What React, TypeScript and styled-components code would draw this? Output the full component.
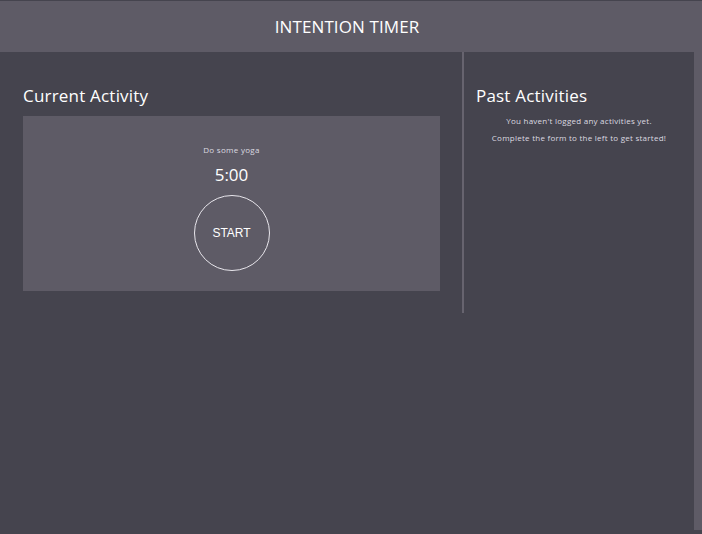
import React from "react";
import styled, { createGlobalStyle } from "styled-components";

const Global = createGlobalStyle`
  html, body { margin: 0; padding: 0; background: #45444e; }
  body { font-family: "Open Sans", "Noto Sans", sans-serif; color: #ffffff; }
  * { box-sizing: border-box; }
`;

const Page = styled.div`
  padding-top: 1px;
  width: 702px;
  display: flex;
  align-items: flex-start;
`;

const Content = styled.div`
  width: 694px;
`;

const Header = styled.header`
  height: 51px;
  background: #5e5b66;
  display: flex;
  align-items: center;
  justify-content: center;
`;

const Title = styled.h1`
  margin: 0;
  font-size: 17px;
  font-weight: 500;
  letter-spacing: 0.1px;
  color: #ffffff;
`;

const Main = styled.main`
  display: flex;
  align-items: flex-start;
  height: 478px;
`;

const LeftSection = styled.section`
  width: 462px;
  padding: 34px 22px 0 23px;
`;

const Divider = styled.div`
  width: 2px;
  height: 261px;
  background: #67646f;
`;

const RightSection = styled.section`
  width: 230px;
  padding: 34px 0 0 12px;
`;

const RightStrip = styled.div`
  width: 8px;
  height: 529px;
  background: #5e5b66;
`;

const Heading = styled.h2`
  margin: 0 0 10px 0;
  font-size: 17px;
  font-weight: 500;
  letter-spacing: 0.2px;
  line-height: 20px;
  color: #ffffff;
`;

const Card = styled.div`
  height: 175px;
  background: #5e5b66;
  display: flex;
  flex-direction: column;
  align-items: center;
  padding-top: 29px;
`;

const Task = styled.p`
  margin: 0;
  font-size: 8px;
  line-height: 10px;
  letter-spacing: 0.3px;
  color: #dcdae0;
`;

const Time = styled.p`
  margin: 10px 0 0 0;
  font-size: 17px;
  line-height: 20px;
  color: #ffffff;
`;

const StartButton = styled.button`
  margin-top: 10px;
  width: 76px;
  height: 76px;
  border-radius: 50%;
  border: 1px solid #e8e6ec;
  background: transparent;
  color: #ffffff;
  font-family: "Liberation Sans", Arial, sans-serif;
  font-size: 12px;
  padding: 0;
`;

const Empty = styled.div`
  display: flex;
  flex-direction: column;
  align-items: center;
  gap: 7px;
  margin-left: -12px;
`;

const EmptyLine = styled.p`
  margin: 0;
  font-size: 8px;
  line-height: 10px;
  letter-spacing: 0.25px;
  color: #dcdae0;
`;

export default function App() {
  return (
    <>
      <Global />
      <Page>
        <Content>
          <Header>
            <Title>INTENTION TIMER</Title>
          </Header>
          <Main>
            <LeftSection>
              <Heading>Current Activity</Heading>
              <Card>
                <Task>Do some yoga</Task>
                <Time>5:00</Time>
                <StartButton>START</StartButton>
              </Card>
            </LeftSection>
            <Divider />
            <RightSection>
              <Heading>Past Activities</Heading>
              <Empty>
                <EmptyLine>You haven't logged any activities yet.</EmptyLine>
                <EmptyLine>Complete the form to the left to get started!</EmptyLine>
              </Empty>
            </RightSection>
          </Main>
        </Content>
        <RightStrip />
      </Page>
    </>
  );
}
